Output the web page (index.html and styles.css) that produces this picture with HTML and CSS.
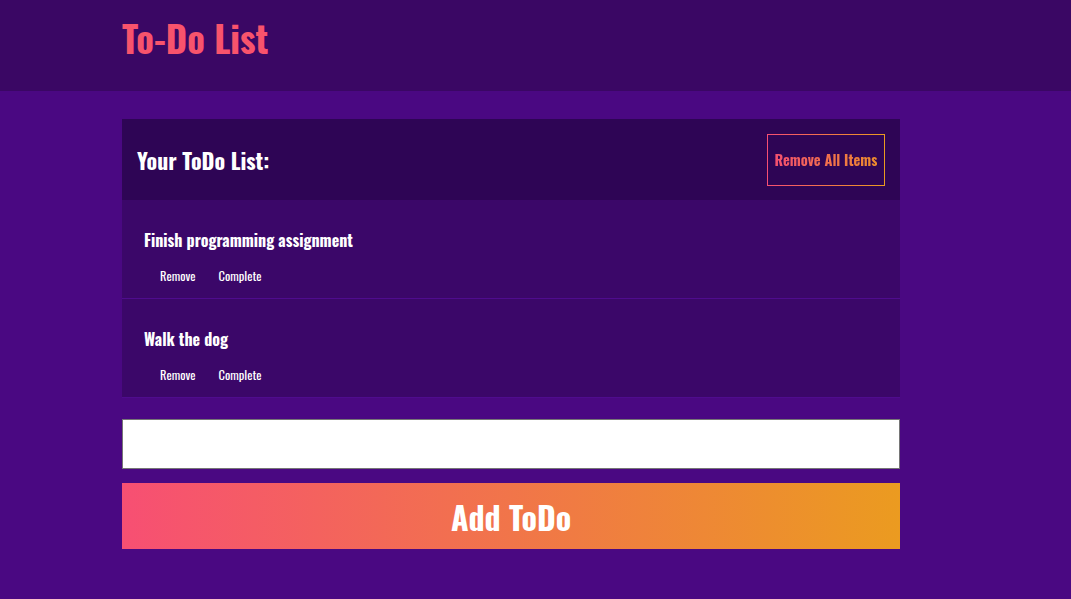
FILE: index.html
```html
<!DOCTYPE html>
<html lang="en">
<head>
<meta charset="utf-8">
<title>To-Do List</title>
<link rel="stylesheet" href="styles.css">
</head>
<body>
<header class="topbar">
  <div class="wrap">
    <h1 class="brand">To-Do List</h1>
  </div>
</header>
<main class="wrap main">
  <section class="list">
    <div class="list-head">
      <h2 class="list-title">Your ToDo List:</h2>
      <button class="clear-btn"><span class="grad-text">Remove All Items</span></button>
    </div>
    <div class="item">
      <h3 class="item-title">Finish programming assignment</h3>
      <div class="item-actions">
        <button class="link-btn">Remove</button>
        <button class="link-btn">Complete</button>
      </div>
    </div>
    <div class="item">
      <h3 class="item-title">Walk the dog</h3>
      <div class="item-actions">
        <button class="link-btn">Remove</button>
        <button class="link-btn">Complete</button>
      </div>
    </div>
  </section>
  <input class="todo-input" type="text" aria-label="New todo">
  <button class="add-btn">Add ToDo</button>
</main>
</body>
</html>
```
FILE: styles.css
```css
* { box-sizing: border-box; }
html, body { margin: 0; padding: 0; }
body {
  background: #4a0882;
  font-family: "Oswald", "Liberation Sans Narrow", "DejaVu Sans Condensed", sans-serif;
  color: #fff;
  min-height: 599px;
}
.wrap {
  width: 778px;
  margin-left: 122px;
}
.topbar {
  background: #3a0764;
  height: 91px;
}
.brand {
  margin: 0;
  padding-top: 16px;
  font-size: 36.5px;
  line-height: 44px;
  font-weight: 700;
  color: #f8536c;
}
.main {
  padding-top: 28px;
  display: flex;
  flex-direction: column;
}
.list-head {
  background: #2e0555;
  height: 81px;
  display: flex;
  align-items: center;
  justify-content: space-between;
  padding: 0 15px;
}
.list-title {
  margin: 0;
  font-size: 22px;
  font-weight: 700;
}
.clear-btn {
  font-family: inherit;
  background: transparent;
  border: 1px solid transparent;
  border-image: linear-gradient(90deg, #f74f73, #eb9b20) 1;
  width: 118px;
  height: 52px;
  padding: 0;
  font-size: 14.5px;
  font-weight: 700;
  cursor: pointer;
}
.grad-text {
  background: linear-gradient(90deg, #f5516f, #ed8c2d);
  -webkit-background-clip: text;
  background-clip: text;
  color: transparent;
}
.item {
  background: #3b0769;
  border-bottom: 1px solid #4f0c8e;
  height: 99px;
  padding: 29px 22px 0;
}
.item-title {
  margin: 0;
  font-size: 16px;
  line-height: 22px;
  font-weight: 700;
}
.item-actions {
  display: flex;
  gap: 23px;
  padding-left: 16px;
  margin-top: 17px;
}
.link-btn {
  font-family: inherit;
  background: none;
  border: 0;
  padding: 0;
  color: #fff;
  font-size: 12.5px;
  line-height: 16px;
  cursor: pointer;
}
.todo-input {
  margin-top: 21px;
  height: 50px;
  width: 100%;
  border: 1px solid #767676;
  background: #fff;
  font-family: inherit;
  font-size: 18px;
  padding: 0 10px;
}
.add-btn {
  margin-top: 14px;
  height: 66px;
  width: 100%;
  border: 0;
  background: linear-gradient(90deg, #f74f73, #eb9b20);
  color: #fff;
  font-family: inherit;
  font-size: 32px;
  font-weight: 700;
  cursor: pointer;
}
```
